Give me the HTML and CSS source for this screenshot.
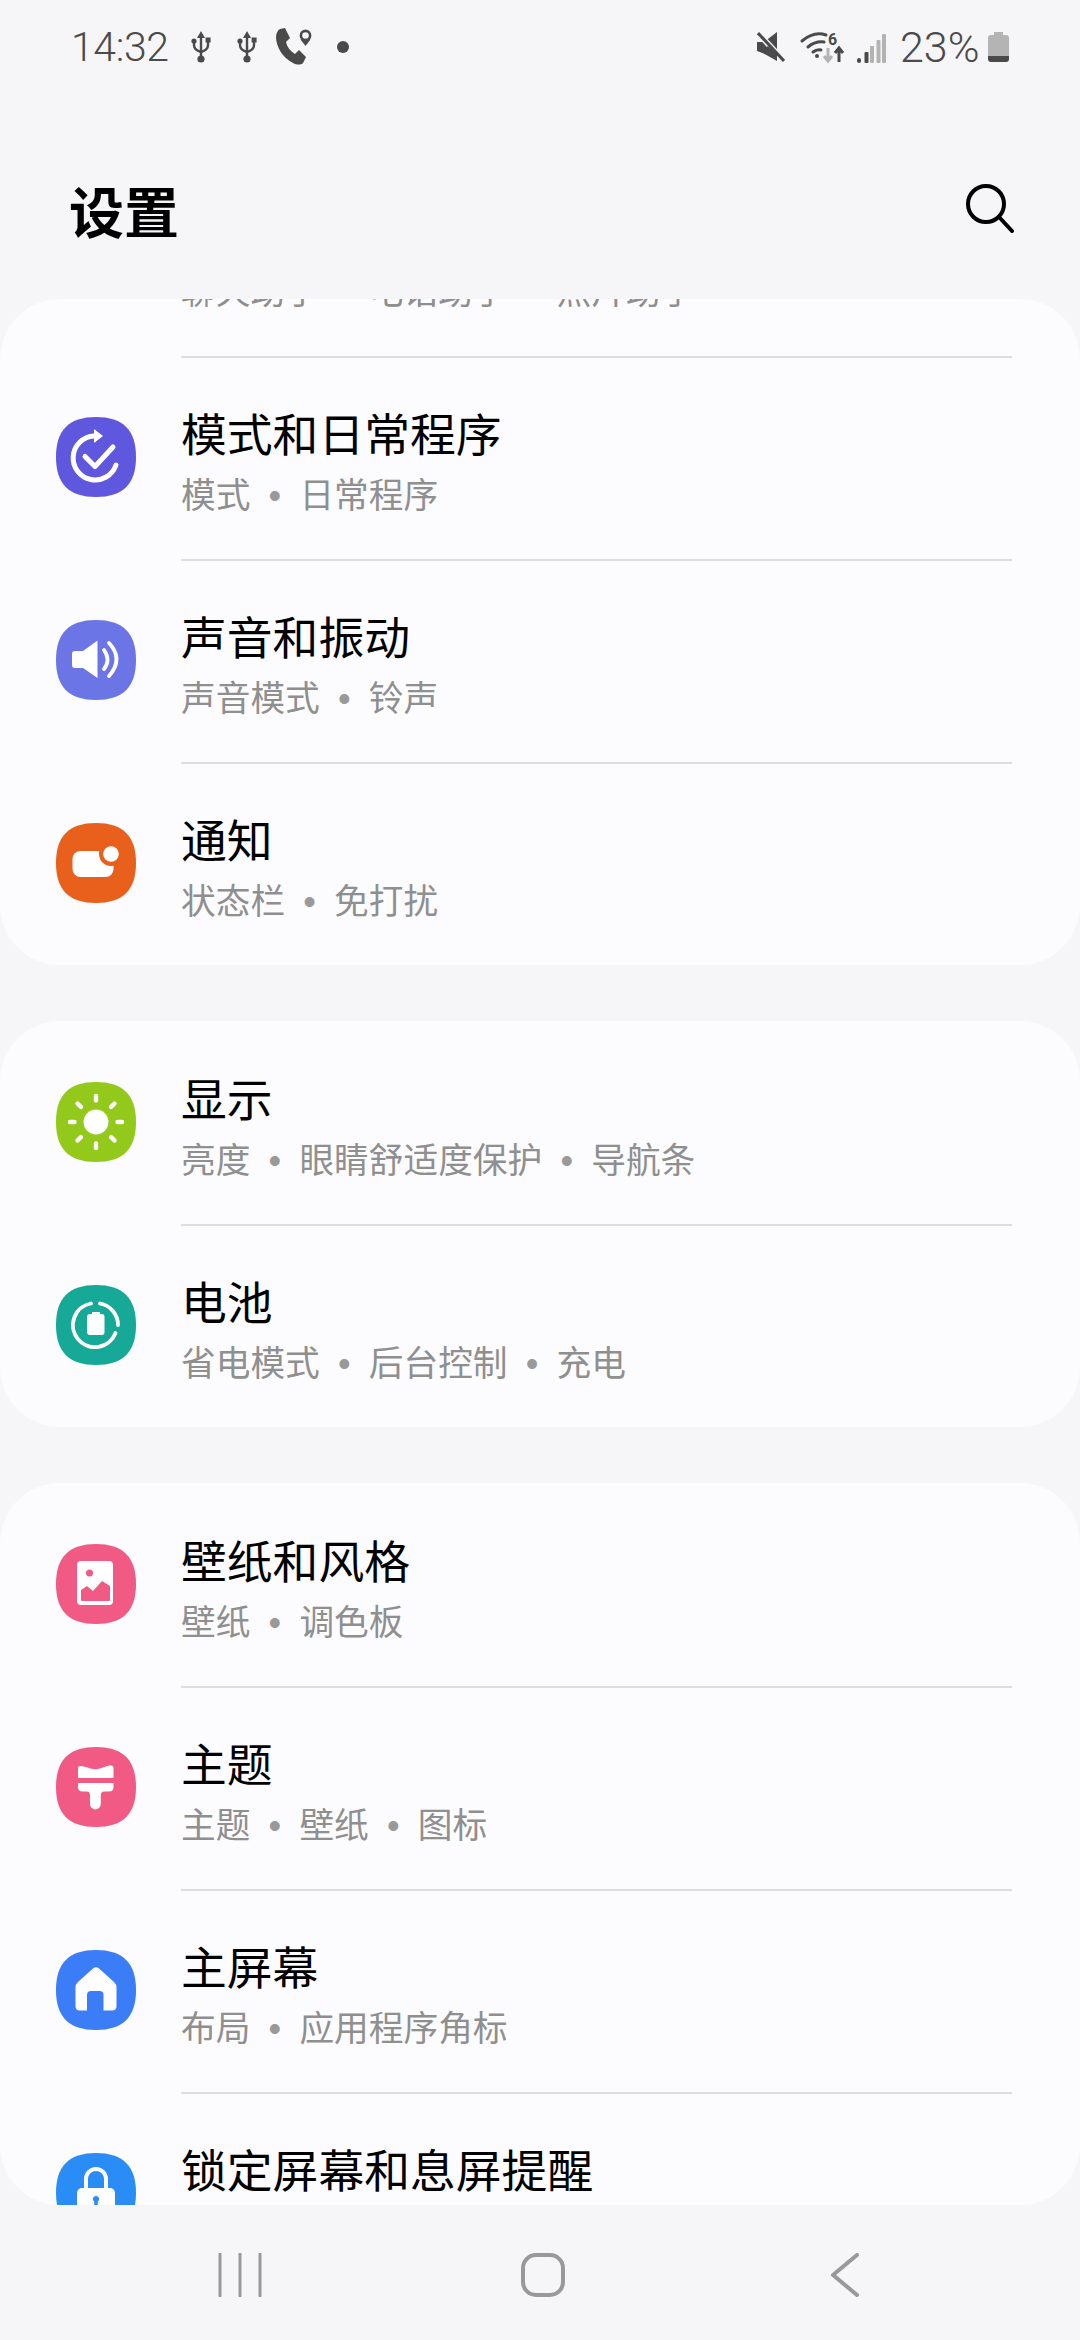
FILE: index.html
```html
<!DOCTYPE html>
<html lang="zh-CN">
<head>
<meta charset="utf-8">
<title>设置</title>
<link rel="stylesheet" href="styles.css">
</head>
<body>
<div class="screen">
  <div class="status">
    <div class="status-left">
      <span class="clock">14:32</span>
      <svg class="usb usb-a" viewBox="0 0 20 32"><g fill="none" stroke="#4a4a4a" stroke-width="2.4"><path d="M10 6V28"/><path d="M3 10V14Q3 19 10 21"/><path d="M17 9V14Q17 19 10 21"/></g><path fill="#4a4a4a" d="M10 0L14 7H6Z"/><circle cx="10" cy="28" r="3.6" fill="#4a4a4a"/><circle cx="3" cy="10" r="2.6" fill="#4a4a4a"/><rect x="14.6" y="6.5" width="5" height="5" fill="#4a4a4a"/></svg>
      <svg class="usb usb-b" viewBox="0 0 20 32"><g fill="none" stroke="#4a4a4a" stroke-width="2.4"><path d="M10 6V28"/><path d="M3 10V14Q3 19 10 21"/><path d="M17 9V14Q17 19 10 21"/></g><path fill="#4a4a4a" d="M10 0L14 7H6Z"/><circle cx="10" cy="28" r="3.6" fill="#4a4a4a"/><circle cx="3" cy="10" r="2.6" fill="#4a4a4a"/><rect x="14.6" y="6.5" width="5" height="5" fill="#4a4a4a"/></svg>
      <svg class="call" viewBox="0 0 38 37"><path fill="#4a4a4a" d="M5 1L10 0L15 10L11 14C12 19 15 23 20 26L24 22L31 29L28 35C26 37 22 37 18 35C8 30 1 19 1 9C1 5 3 2 5 1Z"/><circle cx="30.5" cy="7.5" r="4.6" fill="none" stroke="#4a4a4a" stroke-width="2.6"/><path fill="#4a4a4a" d="M25.5 11.5L30.5 18L35.5 11.5L33 11H28Z"/></svg>
      <span class="dot-ind"></span>
    </div>
    <div class="status-right">
      <svg class="mute" viewBox="0 0 28 30"><path fill="#4a4a4a" d="M0 10H7L20 0V26L0 19Z"/><path d="M1 1L27 29" stroke="#f6f6f8" stroke-width="6"/><path d="M1 1L27 29" stroke="#4a4a4a" stroke-width="3"/><path fill="#4a4a4a" d="M4 20L20 29V22L11 14Z"/></svg>
      <svg class="wifi" viewBox="0 0 45 31"><g fill="none" stroke="#4a4a4a" stroke-width="3" stroke-linecap="round"><path d="M2 9Q14 -1 26 3"/><path d="M8 15Q15 9 24 10"/><path d="M13 20Q17 17 21 18"/></g><circle cx="17" cy="24" r="2" fill="#4a4a4a"/><text class="wifi-six" x="28" y="12.500">6</text><path d="M28 16V28M24 24L28 29L32 24" fill="none" stroke="#b3b3b3" stroke-width="3"/><path d="M39 30V18M35 21L39 16L43 21" fill="none" stroke="#4a4a4a" stroke-width="3"/></svg>
      <svg class="signal" viewBox="0 0 29 29"><rect x="0" y="24" width="4" height="5" rx="2" fill="#4a4a4a"/><rect x="7.5" y="18" width="4" height="11" rx="1" fill="#4a4a4a"/><rect x="13" y="12" width="4" height="17" rx="1" fill="#b3b3b3"/><rect x="19.5" y="6" width="4" height="23" rx="1" fill="#b3b3b3"/><rect x="25" y="0" width="4" height="29" rx="1" fill="#b3b3b3"/></svg>
      <span class="percent">23%</span>
      <svg class="battery" viewBox="0 0 21 30"><path fill="#b4b4b4" d="M6 0H15V3H18Q21 3 21 6V24H0V6Q0 3 3 3H6Z"/><path fill="#4a4a4a" d="M0 24H21V27Q21 30 18 30H3Q0 30 0 27Z"/></svg>
    </div>
  </div>

  <div class="header">
    <h1 class="title">设置</h1>
    <svg class="search" viewBox="0 0 48 49"><circle cx="20" cy="20" r="18" fill="none" stroke="#000" stroke-width="4"/><path d="M33 33L46 47" stroke="#000" stroke-width="4" stroke-linecap="round"/></svg>
  </div>

  <div class="scroller">
    <section class="card card-first">
      <div class="partial"><span class="sub">聊天助手<span class="sep">•</span>电话助手<span class="sep">•</span>照片助手</span></div>
      <div class="row">
        <svg class="icon" viewBox="0 0 80 80"><path fill="#5f57dd" d="M40 0C67 0 80 13 80 40S67 80 40 80 0 67 0 40 13 0 40 0Z"/><g fill="none" stroke="#fff" stroke-width="5" stroke-linecap="round" stroke-linejoin="round"><path d="M60 48A22 22 0 1 1 38 19"/><path d="M29 39.500L39 49.500L57 30"/></g><path fill="#fff" d="M38 12L47 19L38 26Z"/></svg>
        <div class="body"><div class="name">模式和日常程序</div><div class="sub">模式<span class="sep">•</span>日常程序</div></div>
      </div>
      <div class="row">
        <svg class="icon" viewBox="0 0 80 80"><path fill="#6b75e6" d="M40 0C67 0 80 13 80 40S67 80 40 80 0 67 0 40 13 0 40 0Z"/><path fill="#fff" d="M16 34Q16 31 19 31H27L41.500 20.500V58L27 48H19Q16 48 16 45Z"/><g fill="none" stroke="#fff" stroke-width="3.800" stroke-linecap="round"><path d="M48 30Q55 40 48 49"/><path d="M53 23Q68 39 53 56"/></g></svg>
        <div class="body"><div class="name">声音和振动</div><div class="sub">声音模式<span class="sep">•</span>铃声</div></div>
      </div>
      <div class="row">
        <svg class="icon" viewBox="0 0 80 80"><path fill="#e8601c" d="M40 0C67 0 80 13 80 40S67 80 40 80 0 67 0 40 13 0 40 0Z"/><rect x="16.500" y="28" width="41" height="26" rx="8" fill="#fff"/><circle cx="55" cy="31" r="12" fill="#e8601c"/><circle cx="55" cy="31" r="7.800" fill="#fff"/></svg>
        <div class="body"><div class="name">通知</div><div class="sub">状态栏<span class="sep">•</span>免打扰</div></div>
      </div>
    </section>

    <section class="card">
      <div class="row">
        <svg class="icon" viewBox="0 0 80 80"><path fill="#92c91a" d="M40 0C67 0 80 13 80 40S67 80 40 80 0 67 0 40 13 0 40 0Z"/><circle cx="40" cy="40" r="12.500" fill="#fff"/><g stroke="#fff" stroke-width="4.400" stroke-linecap="round"><path d="M40 14V18.500"/><path d="M40 61.500V66"/><path d="M14 40H18.500"/><path d="M61.500 40H66"/><path d="M21.500 21.500L25 25"/><path d="M55 55L58.500 58.500"/><path d="M21.500 58.500L25 55"/><path d="M55 25L58.500 21.500"/></g></svg>
        <div class="body"><div class="name">显示</div><div class="sub">亮度<span class="sep">•</span>眼睛舒适度保护<span class="sep">•</span>导航条</div></div>
      </div>
      <div class="row">
        <svg class="icon" viewBox="0 0 80 80"><path fill="#17a998" d="M40 0C67 0 80 13 80 40S67 80 40 80 0 67 0 40 13 0 40 0Z"/><g fill="none" stroke="#fff" stroke-width="3.800" stroke-linecap="round"><path d="M44 18.500A22 22 0 0 1 62 40"/><path d="M59.500 48A22 22 0 1 1 35 18.500"/></g><path fill="#fff" d="M36 27H44V29H46Q48.500 29 48.500 32V47Q48.500 50 46 50H34Q31 50 31 47V32Q31 29 34 29H36Z"/></svg>
        <div class="body"><div class="name">电池</div><div class="sub">省电模式<span class="sep">•</span>后台控制<span class="sep">•</span>充电</div></div>
      </div>
    </section>

    <section class="card">
      <div class="row">
        <svg class="icon" viewBox="0 0 80 80"><path fill="#f05a85" d="M40 0C67 0 80 13 80 40S67 80 40 80 0 67 0 40 13 0 40 0Z"/><rect x="21" y="17" width="36" height="44" rx="4" fill="#fff"/><circle cx="33.500" cy="29" r="3.500" fill="#f05a85"/><path fill="#f05a85" d="M25 56V46L31 42L37 47L46 37L54 42V56Q54 57 53 57H26Q25 57 25 56Z"/></svg>
        <div class="body"><div class="name">壁纸和风格</div><div class="sub">壁纸<span class="sep">•</span>调色板</div></div>
      </div>
      <div class="row">
        <svg class="icon" viewBox="0 0 80 80"><path fill="#f05a85" d="M40 0C67 0 80 13 80 40S67 80 40 80 0 67 0 40 13 0 40 0Z"/><path fill="#fff" d="M22 21Q22 19 24 19C30 19 35 23 42 22C47 21 50 18.500 55 18.500Q57.500 18.500 57.500 21V31H22Z"/><path fill="#fff" d="M22 36H57.500V40Q57.500 44.500 53 44.500H48Q44.800 44.500 44.800 48V57A5.400 5.400 0 0 1 34 57V48Q34 44.500 31 44.500H26.500Q22 44.500 22 40Z"/></svg>
        <div class="body"><div class="name">主题</div><div class="sub">主题<span class="sep">•</span>壁纸<span class="sep">•</span>图标</div></div>
      </div>
      <div class="row">
        <svg class="icon" viewBox="0 0 80 80"><path fill="#3b7cf7" d="M40 0C67 0 80 13 80 40S67 80 40 80 0 67 0 40 13 0 40 0Z"/><path fill="#fff" d="M37.500 18Q40 16.500 42.500 18L58 32Q60.500 34.500 60.500 37V56Q60.500 60.500 56 60.500H47.500V45Q47.500 41 43.500 41H35Q31 41 31 45V60.500H24Q19.500 60.500 19.500 56V37Q19.500 34.500 22 32Z"/></svg>
        <div class="body"><div class="name">主屏幕</div><div class="sub">布局<span class="sep">•</span>应用程序角标</div></div>
      </div>
      <div class="row">
        <svg class="icon" viewBox="0 0 80 80"><path fill="#2a8cf5" d="M40 0C67 0 80 13 80 40S67 80 40 80 0 67 0 40 13 0 40 0Z"/><path d="M30 37V26A10 10 0 0 1 50 26V37" fill="none" stroke="#fff" stroke-width="4"/><rect x="21" y="35" width="38" height="30" rx="5" fill="#fff"/><path d="M40 43a3 3 0 0 1 1.800 5.400V53H38.200V48.400A3 3 0 0 1 40 43Z" fill="#2a8cf5"/></svg>
        <div class="body"><div class="name">锁定屏幕和息屏提醒</div></div>
      </div>
    </section>
  </div>

  <div class="nav">
    <div class="nav-btn"><svg class="nav-icon" viewBox="0 0 44 44"><path d="M2 1V43M22 1V43M42 1V43" stroke="#999" stroke-width="3" stroke-linecap="round" fill="none"/></svg></div>
    <div class="nav-btn"><svg class="nav-icon" viewBox="0 0 44 44"><rect x="2" y="2" width="40" height="40" rx="13" fill="none" stroke="#999" stroke-width="4"/></svg></div>
    <div class="nav-btn"><svg class="nav-icon" viewBox="0 0 44 44"><path d="M33 2L9 22L33 42" fill="none" stroke="#999" stroke-width="4" stroke-linecap="round" stroke-linejoin="round"/></svg></div>
  </div>
</div>
</body>
</html>
```
FILE: styles.css
```css
* { box-sizing: border-box; }
html, body { margin: 0; padding: 0; }
body {
  background: #f6f6f8;
  font-family: "Noto Sans CJK SC", "Noto Sans", sans-serif;
  color: #000;
}
.screen { width: 1080px; height: 2340px; display: flex; flex-direction: column; overflow: hidden; }

.status {
  height: 94px;
  flex: none;
  display: flex;
  justify-content: space-between;
  align-items: center;
  padding: 0 71px 0 71px;
  color: #4a4a4a;
}
.status-left, .status-right { display: flex; align-items: center; }
.clock { font: 300 41px/1 Roboto, sans-serif; width: 97px; letter-spacing: -0.4px; white-space: nowrap; }
.usb { width: 20px; height: 32px; }
.usb-a { margin-left: 23px; }
.usb-b { margin-left: 26px; }
.call { width: 38px; height: 37px; margin-left: 18px; margin-top: -1px; }
.dot-ind { width: 12px; height: 12px; border-radius: 50%; background: #4a4a4a; margin-left: 24px; }
.mute { width: 28px; height: 30px; }
.wifi { width: 45px; height: 31px; margin-left: 15px; overflow: visible; }
.wifi-six { font: 700 16px/1 Roboto, sans-serif; fill: #4a4a4a; }
.signal { width: 29px; height: 29px; margin-left: 12px; margin-top: 2px; }
.percent { font: 300 43px/1 Roboto, sans-serif; width: 80px; margin-left: 14px; white-space: nowrap; }
.battery { width: 21px; height: 30px; margin-left: 8px; }

.header {
  height: 205px;
  flex: none;
  display: flex;
  justify-content: space-between;
  align-items: flex-start;
  padding: 0 66px 0 69px;
}
.title { margin: 80px 0 0; font-size: 55px; line-height: 70px; font-weight: 700; }
.search { width: 48px; height: 49px; margin-top: 90px; }

.scroller {
  flex: 1;
  min-height: 0;
  overflow: hidden;
  border-radius: 60px;
  display: flex;
  flex-direction: column;
  gap: 56px;
}
.card { flex: none; background: #fcfcfe; border-radius: 60px; padding-top: 2px; }
.card-first { padding-top: 0; }
.partial {
  height: 59px;
  margin-left: 181px;
  margin-right: 68px;
  border-bottom: 2px solid #dedee0;
  display: flex;
  align-items: flex-end;
  padding-bottom: 43px;
  white-space: nowrap;
}
.row { height: 203px; display: flex; padding-left: 56px; }
.row:last-child { height: 201px; }
.icon { width: 80px; height: 80px; flex: none; margin-top: 59px; }
.body {
  flex: 1;
  margin-left: 45px;
  margin-right: 68px;
  padding-top: 44px;
  border-bottom: 2px solid #dedee0;
}
.row:last-child .body { border-bottom: none; }
.name { font-size: 45.8px; line-height: 60px; color: #000; }
.sub { margin-top: 7px; font-size: 34.7px; line-height: 48px; color: #8f8f8f; white-space: nowrap; }
.partial .sub { margin: 0; }
.sep {
  display: inline-block;
  width: 49px;
  text-align: center;
  font-family: "Liberation Sans", sans-serif;
  font-size: 36px;
  line-height: 1;
  color: #999;
}

.nav {
  height: 135px;
  flex: none;
  display: flex;
  justify-content: center;
  padding: 48px 0 0 6px;
}
.nav-btn { width: 303px; display: flex; justify-content: center; align-items: flex-start; }
.nav-icon { width: 44px; height: 44px; }
```
